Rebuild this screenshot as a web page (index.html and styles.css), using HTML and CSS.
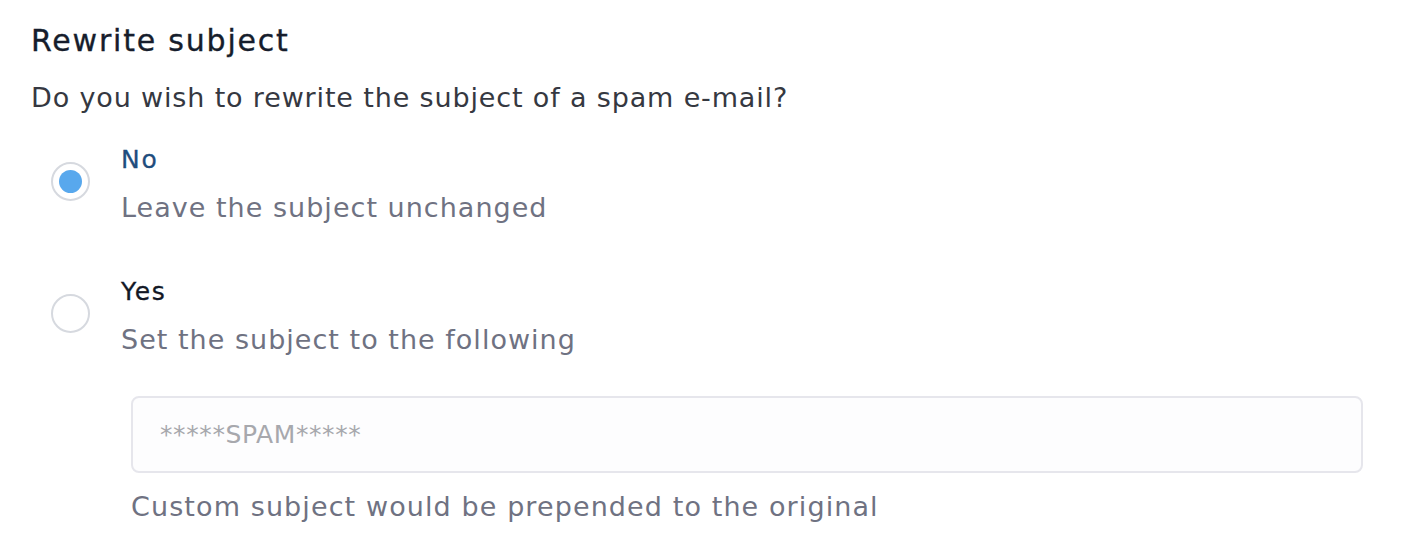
FILE: index.html
```html
<!DOCTYPE html>
<html lang="en">
<head>
<meta charset="utf-8">
<title>Rewrite subject</title>
<link rel="stylesheet" href="styles.css">
</head>
<body>
<section class="field">
  <h2 class="title">Rewrite subject</h2>
  <p class="question">Do you wish to rewrite the subject of a spam e-mail?</p>
  <div class="options">
    <label class="option">
      <span class="radio radio-checked"><span class="radio-dot"></span></span>
      <span class="option-text">
        <span class="option-label option-label-active">No</span>
        <span class="option-desc">Leave the subject unchanged</span>
      </span>
    </label>
    <label class="option">
      <span class="radio"></span>
      <span class="option-text">
        <span class="option-label">Yes</span>
        <span class="option-desc">Set the subject to the following</span>
      </span>
    </label>
  </div>
  <div class="custom">
    <div class="input-box"><span class="placeholder">*****SPAM*****</span></div>
    <p class="helper">Custom subject would be prepended to the original</p>
  </div>
</section>
</body>
</html>
```
FILE: styles.css
```css
html, body {
  margin: 0;
  padding: 0;
  background: #ffffff;
}

body {
  font-family: "DejaVu Sans", "Noto Sans", sans-serif;
}

.field {
  padding: 23px 39px 0 31px;
}

.title {
  margin: 0;
  font-size: 30px;
  line-height: 36px;
  font-weight: 400;
  letter-spacing: 1.8px;
  color: #161d2c;
  -webkit-text-stroke: 0.35px #161d2c;
}

.question {
  margin: 21px 0 0;
  font-size: 27px;
  line-height: 36px;
  letter-spacing: 0.85px;
  color: #353841;
}

.options {
  display: flex;
  flex-direction: column;
  gap: 50px;
  margin-top: 28px;
}

.option {
  display: flex;
  align-items: flex-start;
  gap: 31px;
  padding-left: 20px;
}

.radio {
  box-sizing: border-box;
  width: 39px;
  height: 39px;
  margin-top: 18px;
  border: 2px solid #d6d9df;
  border-radius: 50%;
  background: #ffffff;
  display: flex;
  align-items: center;
  justify-content: center;
  flex: none;
}

.radio-dot {
  width: 23px;
  height: 23px;
  border-radius: 50%;
  background: #58a8ed;
}

.option-text {
  display: flex;
  flex-direction: column;
  gap: 14px;
}

.option-label {
  font-size: 25px;
  line-height: 32px;
  letter-spacing: 1.7px;
  color: #131826;
  -webkit-text-stroke: 0.3px currentColor;
}

.option-label-active {
  color: #1f4d7d;
}

.option-desc {
  font-size: 27px;
  line-height: 36px;
  letter-spacing: 1.02px;
  color: #6f7282;
}

.custom {
  margin-top: 38px;
  padding-left: 100px;
}

.input-box {
  box-sizing: border-box;
  height: 77px;
  border: 2px solid #e6e6ec;
  border-radius: 8px;
  background: #fdfdfe;
  display: flex;
  align-items: center;
  padding: 0 0 0 27px;
}

.placeholder {
  font-size: 25px;
  letter-spacing: 0.6px;
  color: #a7a8ad;
}

.helper {
  margin: 16px 0 0;
  font-size: 27px;
  line-height: 36px;
  letter-spacing: 1.1px;
  color: #6f7282;
}
```
